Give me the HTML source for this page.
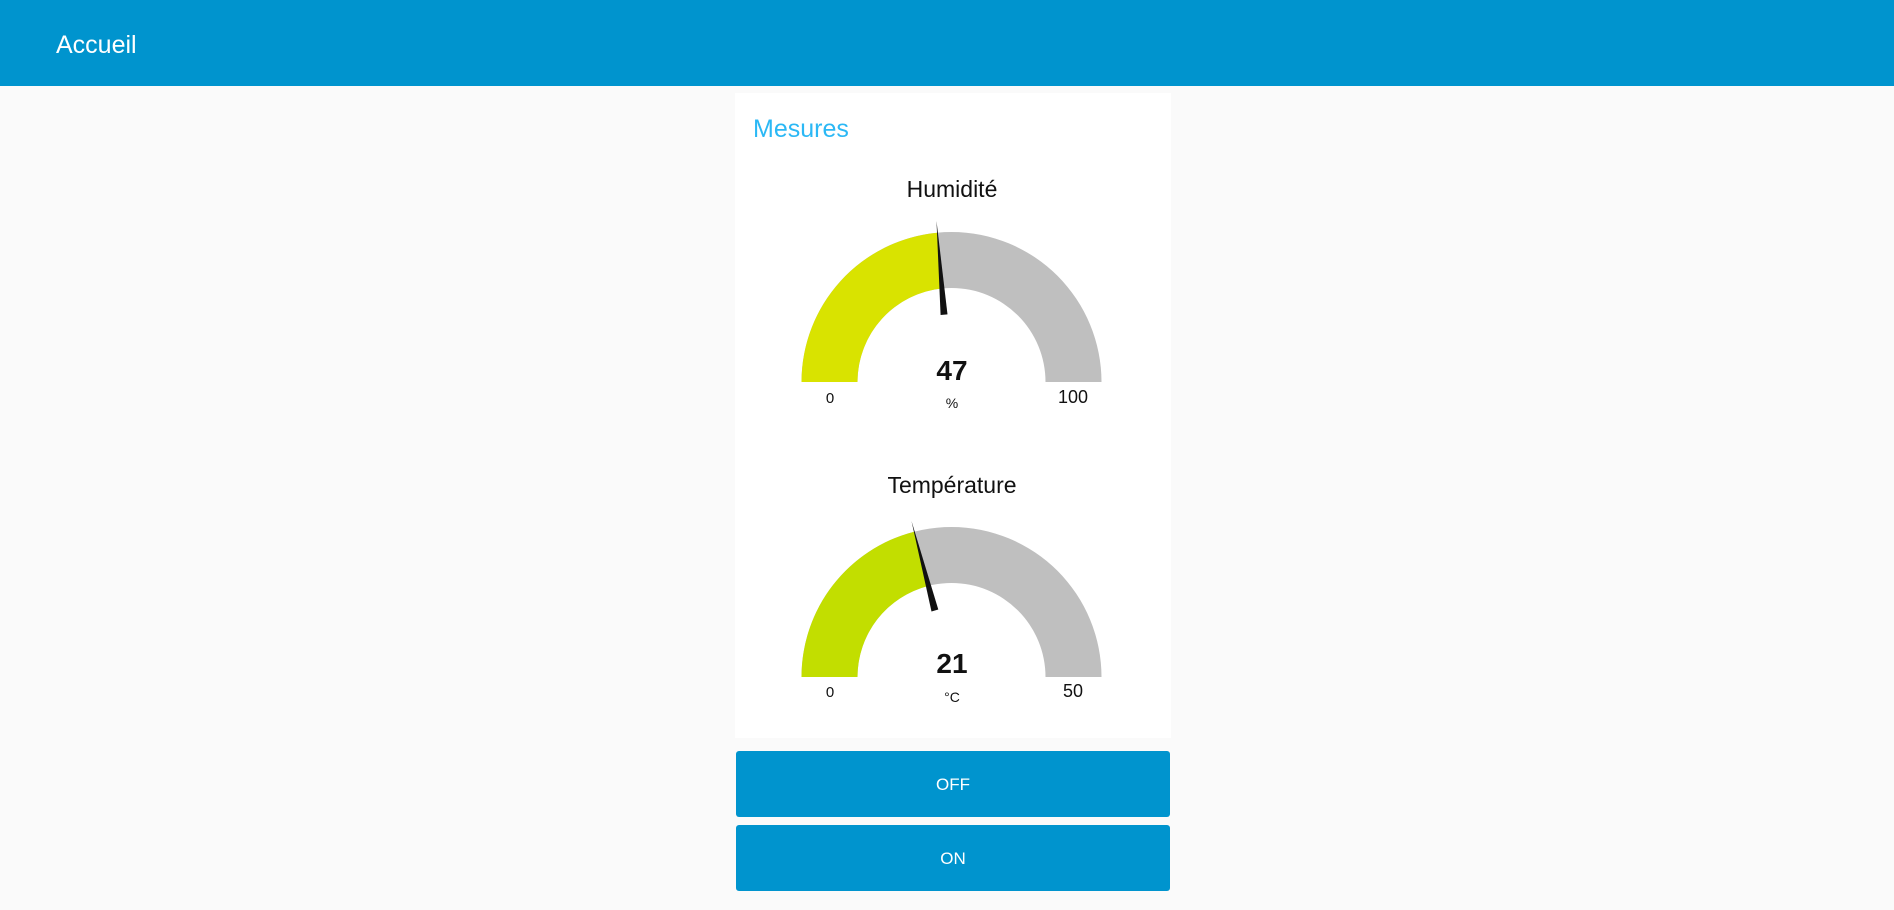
<!DOCTYPE html>
<html><head><meta charset="utf-8"><style>
html,body{margin:0;padding:0;width:1894px;height:910px;background:#fafafa;overflow:hidden;font-family:"Liberation Sans",sans-serif}
.hdr{position:absolute;left:0;top:0;width:1894px;height:86px;background:#0094ce}
.hdr span{position:absolute;left:56px;top:31px;font-size:25px;color:#fff}
.card{position:absolute;left:735px;top:93px;width:436px;height:645px;background:#fff}
.btn{position:absolute;left:736px;width:434px;height:66px;background:#0094ce;border-radius:3px;color:#fff;font-size:17px;text-align:center;line-height:68px}
svg{position:absolute;left:0;top:0}
</style></head><body>
<div class="hdr"><span>Accueil</span></div>
<div class="card"></div>
<div class="btn" style="top:751px">OFF</div>
<div class="btn" style="top:825px">ON</div>
<svg width="1894" height="910" font-family="Liberation Sans, sans-serif">
<text x="753" y="137" font-size="25" fill="#2bb8f5">Mesures</text>
<text x="952" y="197" font-size="23" fill="#111" text-anchor="middle">Humidité</text>
<path d="M801.5 382 A150 150 0 0 1 1101.5 382 L1045.5 382 A94 94 0 0 0 857.5 382 Z" fill="#bfbfbf"/>
<path d="M801.5 382 A150 150 0 0 1 937.4 232.7 L942.7 288.4 A94 94 0 0 0 857.5 382 Z" fill="#d9e300"/>
<polygon points="936.5,221 940.6,315 947.5,314.4" fill="#111"/>
<text x="952" y="380" font-size="28" font-weight="bold" fill="#111" text-anchor="middle">47</text>
<text x="952" y="408" font-size="14" fill="#111" text-anchor="middle">%</text>
<text x="830" y="403" font-size="15" fill="#111" text-anchor="middle">0</text>
<text x="1073" y="403" font-size="18" fill="#111" text-anchor="middle">100</text>
<text x="952" y="493" font-size="23" fill="#111" text-anchor="middle">Température</text>
<path d="M801.5 677 A150 150 0 0 1 1101.5 677 L1045.5 677 A94 94 0 0 0 857.5 677 Z" fill="#bfbfbf"/>
<path d="M801.5 677 A150 150 0 0 1 914.2 531.7 L928.1 586 A94 94 0 0 0 857.5 677 Z" fill="#c2de00"/>
<polygon points="911.5,521 931.5,611.5 938.3,609.5" fill="#111"/>
<text x="952" y="673" font-size="28" font-weight="bold" fill="#111" text-anchor="middle">21</text>
<text x="952" y="702" font-size="14" fill="#111" text-anchor="middle">°C</text>
<text x="830" y="697" font-size="15" fill="#111" text-anchor="middle">0</text>
<text x="1073" y="697" font-size="18" fill="#111" text-anchor="middle">50</text>
</svg>
</body></html>
